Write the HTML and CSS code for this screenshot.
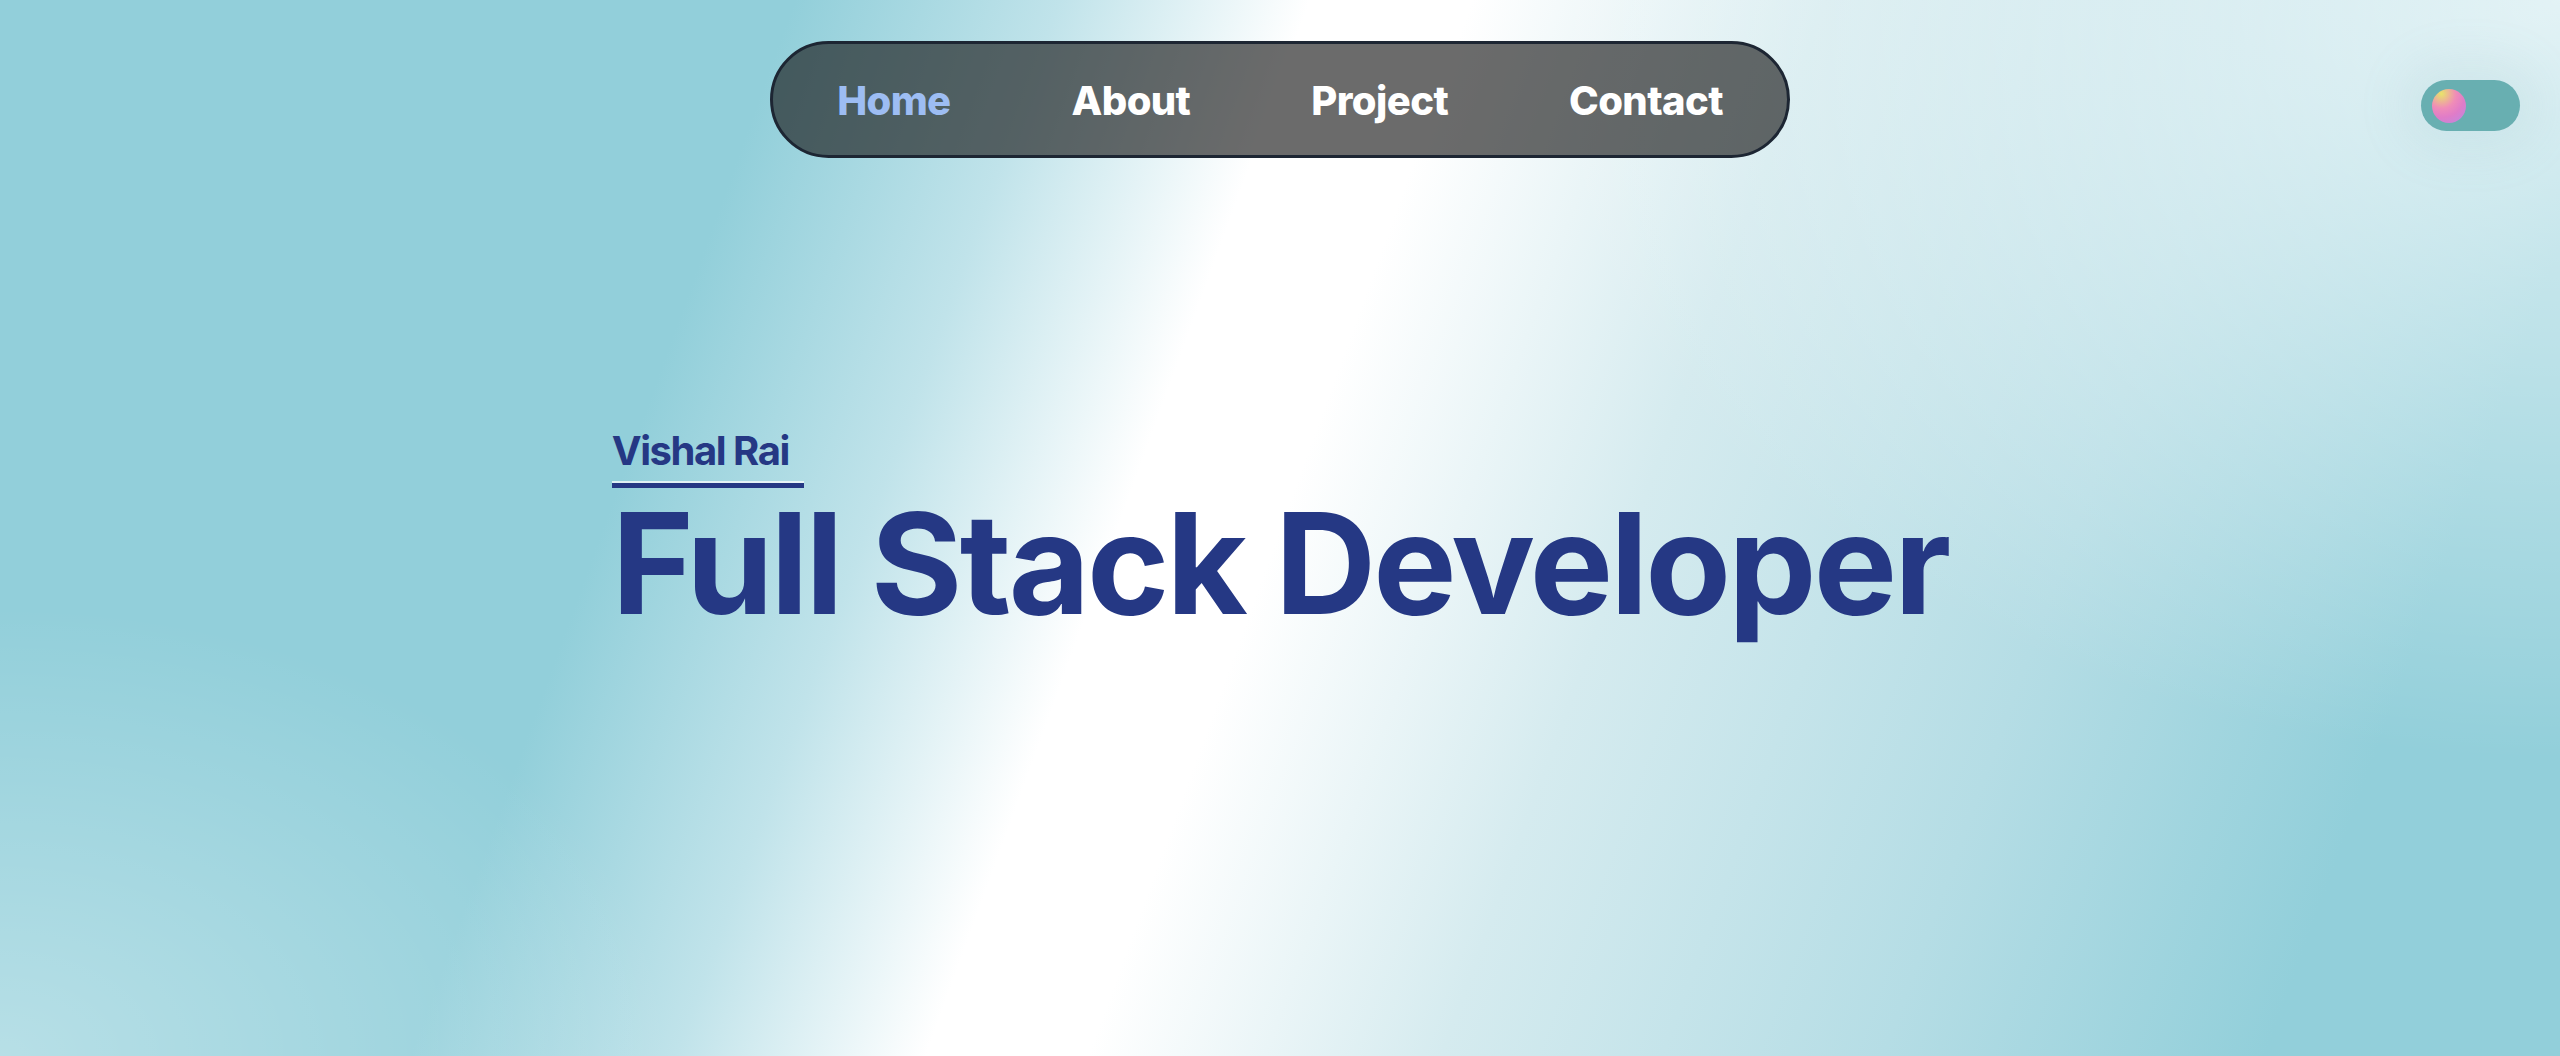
FILE: index.html
```html
<!DOCTYPE html>
<html lang="en">
<head>
<meta charset="utf-8">
<title>Vishal Rai — Full Stack Developer</title>
<link rel="stylesheet" href="styles.css">
</head>
<body>
<div class="page">
  <header class="topbar">
    <div class="spacer"></div>
    <nav class="nav">
      <a class="nav-link active" href="#home">Home</a>
      <a class="nav-link" href="#about">About</a>
      <a class="nav-link" href="#project">Project</a>
      <a class="nav-link" href="#contact">Contact</a>
    </nav>
    <div class="toggle-wrap">
      <button class="toggle" aria-label="Toggle theme"><span class="knob"></span></button>
    </div>
  </header>
  <main class="hero">
    <div class="hero-inner">
      <p class="name">Vishal Rai</p>
      <div class="name-bar"></div>
      <h1 class="title">Full Stack Developer</h1>
    </div>
  </main>
</div>
</body>
</html>
```

FILE: styles.css
```css
* { box-sizing: border-box; }

html, body {
  margin: 0;
  padding: 0;
  height: 100%;
}

body {
  font-family: "Inter", "Noto Sans", "Liberation Sans", sans-serif;
  background-color: #92cfda;
  background-image:
    radial-gradient(ellipse 900px 600px at 0% 100%, rgba(255,255,255,0.34), rgba(255,255,255,0) 75%),
    radial-gradient(ellipse 1300px 950px at 100% 0%, rgba(255,255,255,0.72), rgba(255,255,255,0) 80%),
    linear-gradient(110deg, #92cfda 0%, #92cfda 27%, #c0e3ea 36%, #ffffff 44.5%, #ffffff 50%, #d5ebef 62%, #b5dde5 77%, #92cfda 90%, #92cfda 100%);
  overflow: hidden;
}

.page {
  height: 100vh;
  display: flex;
  flex-direction: column;
}

.topbar {
  display: grid;
  grid-template-columns: 1fr auto 1fr;
  align-items: start;
  padding-top: 41px;
}

.nav {
  display: flex;
  align-items: center;
  gap: 121px;
  height: 117px;
  padding: 0 64px;
  border: 3px solid #1d2633;
  border-radius: 999px;
  background: rgba(20, 20, 20, 0.63);
}

.nav-link {
  font-size: 40px;
  font-weight: 800;
  letter-spacing: -0.6px;
  color: #ffffff;
  text-decoration: none;
  line-height: 1;
  padding-top: 2px;
}

.nav-link.active {
  color: #9dbdf3;
}

.toggle-wrap {
  display: flex;
  justify-content: flex-end;
  padding-right: 40px;
  padding-top: 39px;
}

.toggle {
  display: flex;
  align-items: center;
  width: 99px;
  height: 51px;
  padding: 0 0 0 11px;
  border: none;
  border-radius: 999px;
  background: #68afb1;
  box-shadow: 0 0 50px 18px rgba(120, 170, 180, 0.12);
}

.knob {
  display: block;
  width: 34px;
  height: 34px;
  border-radius: 50%;
  background: radial-gradient(circle at 28% 14%, #e8e46a 0%, #f08cb8 38%, #e07cc8 62%, #b98ae4 100%);
}

.hero {
  display: flex;
  justify-content: center;
  padding-top: 269px;
}

.hero-inner {
  display: flex;
  flex-direction: column;
  align-items: flex-start;
}

.name {
  margin: 0;
  font-size: 40px;
  font-weight: 700;
  letter-spacing: -1.45px;
  line-height: 48px;
  color: #253884;
}

.name-bar {
  margin-top: 6px;
  width: 192px;
  height: 7px;
  border-top: 2px solid rgba(255, 255, 255, 0.7);
  background: #253884;
  background-clip: padding-box;
}

.title {
  margin: 5px 0 0;
  font-size: 140px;
  font-weight: 700;
  letter-spacing: -2.9px;
  line-height: 140px;
  color: #253884;
}
```
